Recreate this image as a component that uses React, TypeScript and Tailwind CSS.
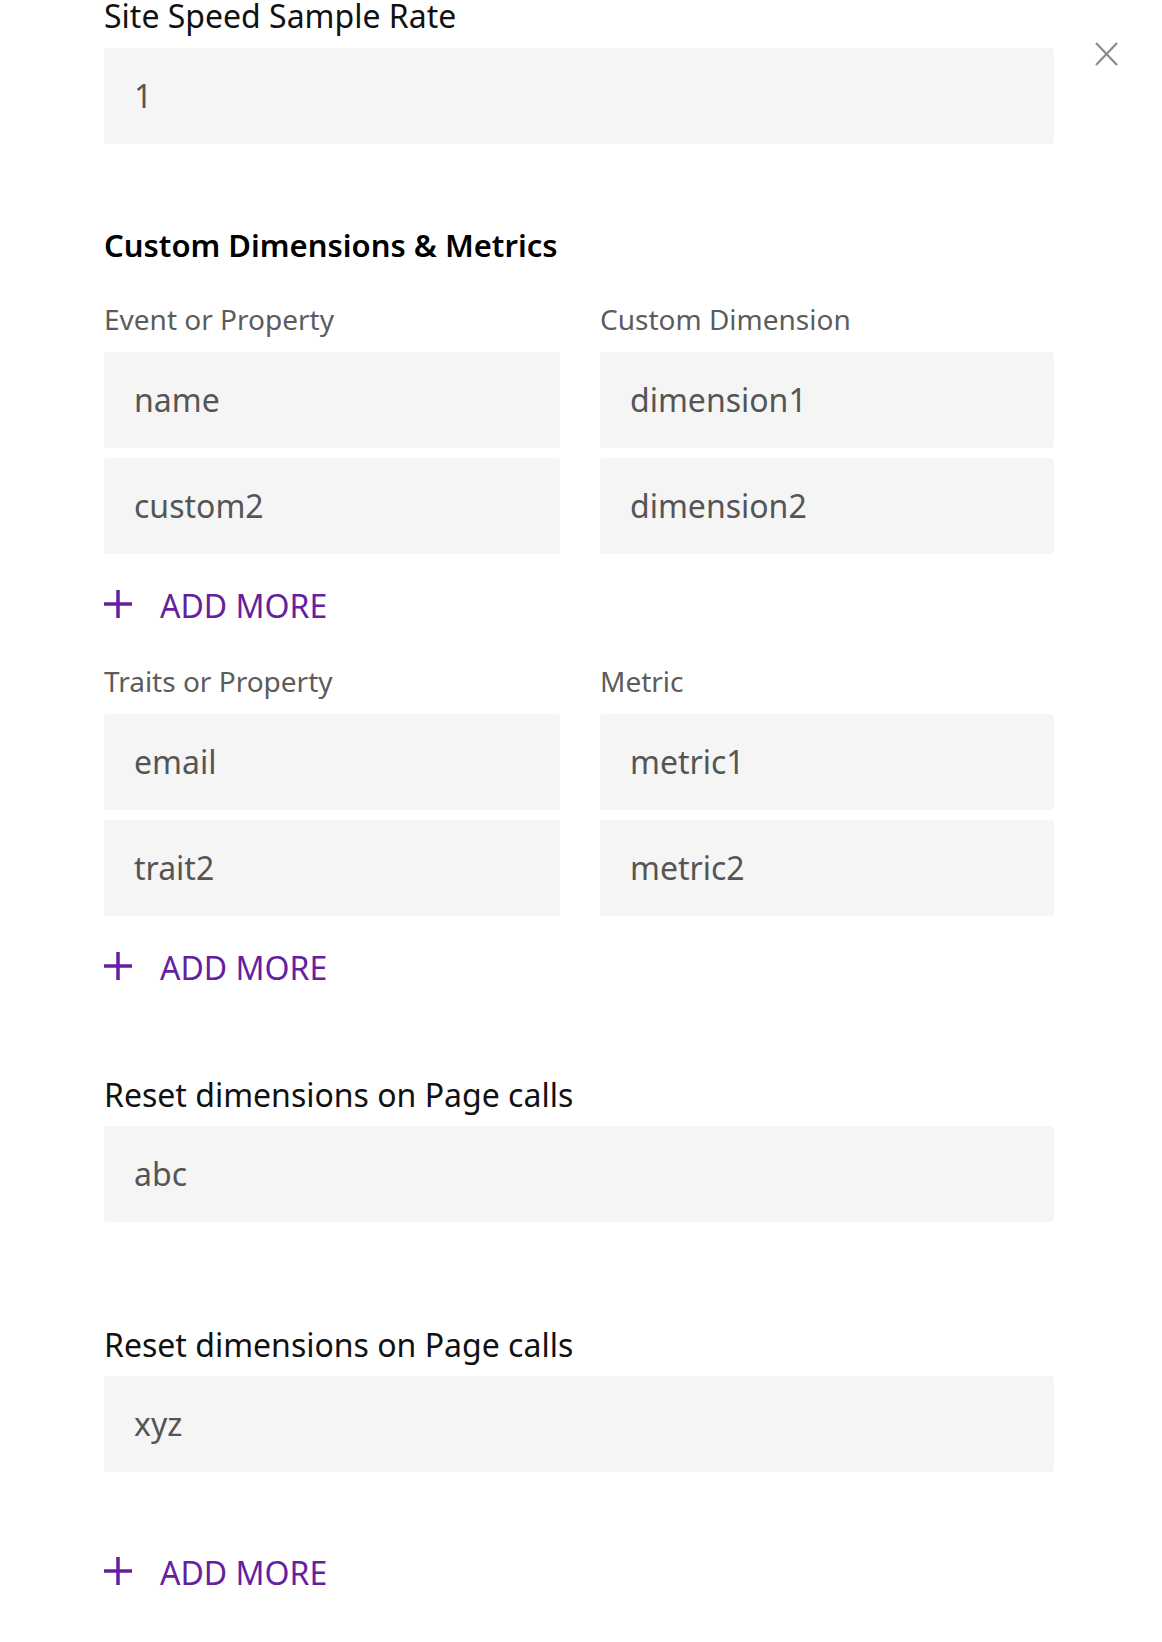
const font = { fontFamily: '"Noto Sans", "Open Sans", sans-serif' };

function Field({ value }: { value: string }) {
  return (
    <div className="flex h-[96px] items-center rounded bg-[#f5f5f5] pl-[30px] text-[32px] leading-[40px] text-[#555]">
      {value}
    </div>
  );
}

function PlusIcon() {
  return (
    <svg width="28" height="28" viewBox="0 0 28 28" className="-translate-y-[2px]" aria-hidden="true">
      <rect x="0" y="12.25" width="28" height="3.5" fill="currentColor" />
      <rect x="12.25" y="0" width="3.5" height="28" fill="currentColor" />
    </svg>
  );
}

function AddMore({ className }: { className: string }) {
  return (
    <button
      type="button"
      className={`flex h-[40px] items-center gap-[28px] text-[32px] leading-[40px] text-[#651fa0] ${className}`}
    >
      <PlusIcon />
      ADD MORE
    </button>
  );
}

function PairGroup({
  left,
  right,
  rows,
  className,
}: {
  left: string;
  right: string;
  rows: [string, string][];
  className: string;
}) {
  return (
    <div className={`flex flex-col ${className}`}>
      <div className="mb-[16px] grid grid-cols-[456px_1fr] gap-x-[40px] text-[28px] leading-[34px] text-[#5c5c5c]">
        <p>{left}</p>
        <p>{right}</p>
      </div>
      <div className="flex flex-col gap-[10px]">
        {rows.map(([a, b], i) => (
          <div key={i} className="grid grid-cols-[456px_1fr] gap-x-[40px]">
            <Field value={a} />
            <Field value={b} />
          </div>
        ))}
      </div>
    </div>
  );
}

export default function App() {
  return (
    <div className="relative min-h-[1642px] w-[1162px] bg-white" style={font}>
      {/* close */}
      <button type="button" className="absolute left-[1095px] top-[42px] text-[#8a8a8a]" aria-label="Close">
        <svg width="23" height="24" viewBox="0 0 23 24" fill="none" stroke="currentColor" strokeWidth="2.2">
          <line x1="1" y1="1" x2="22" y2="23" />
          <line x1="22" y1="1" x2="1" y2="23" />
        </svg>
      </button>

      <div className="ml-[104px] flex w-[950px] flex-col">
        <p className="text-[32px] leading-[32px] text-[#111]">Site Speed Sample Rate</p>
        <div className="mt-[16px]">
          <Field value="1" />
        </div>

        <h2 className="mt-[84px] text-[31px] font-semibold leading-[34px] text-black">
          Custom Dimensions &amp; Metrics
        </h2>

        <PairGroup
          className="mt-[40px]"
          left="Event or Property"
          right="Custom Dimension"
          rows={[
            ["name", "dimension1"],
            ["custom2", "dimension2"],
          ]}
        />
        <AddMore className="mt-[32px]" />

        <PairGroup
          className="mt-[38px]"
          left="Traits or Property"
          right="Metric"
          rows={[
            ["email", "metric1"],
            ["trait2", "metric2"],
          ]}
        />
        <AddMore className="mt-[32px]" />

        <p className="mt-[91px] text-[32px] leading-[32px] text-[#111]">Reset dimensions on Page calls</p>
        <div className="mt-[15px]">
          <Field value="abc" />
        </div>

        <p className="mt-[107px] text-[32px] leading-[32px] text-[#111]">Reset dimensions on Page calls</p>
        <div className="mt-[15px]">
          <Field value="xyz" />
        </div>

        <AddMore className="mt-[81px]" />
      </div>
    </div>
  );
}
